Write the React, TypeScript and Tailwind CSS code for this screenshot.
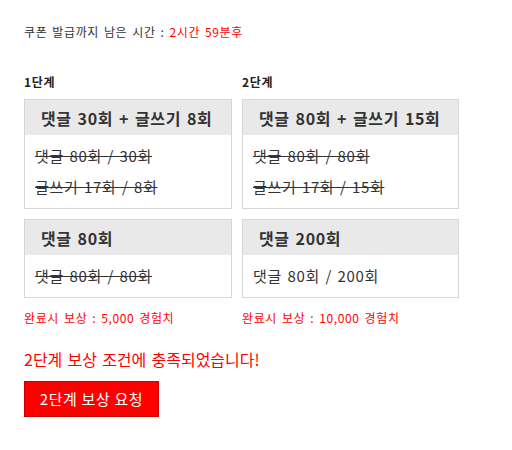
const font = "font-['Noto_Sans_CJK_KR','Noto_Sans',sans-serif] tracking-[0.04em] [word-spacing:0.1em]";

type Stage = {
  label: string;
  cards: { title: string; lines: { text: string; done: boolean }[] }[];
  reward: string;
};

const stages: Stage[] = [
  {
    label: "1단계",
    cards: [
      {
        title: "댓글 30회 + 글쓰기 8회",
        lines: [
          { text: "댓글 80회 / 30회", done: true },
          { text: "글쓰기 17회 / 8회", done: true },
        ],
      },
      {
        title: "댓글 80회",
        lines: [{ text: "댓글 80회 / 80회", done: true }],
      },
    ],
    reward: "완료시 보상 : 5,000 경험치",
  },
  {
    label: "2단계",
    cards: [
      {
        title: "댓글 80회 + 글쓰기 15회",
        lines: [
          { text: "댓글 80회 / 80회", done: true },
          { text: "글쓰기 17회 / 15회", done: true },
        ],
      },
      {
        title: "댓글 200회",
        lines: [{ text: "댓글 80회 / 200회", done: false }],
      },
    ],
    reward: "완료시 보상 : 10,000 경험치",
  },
];

function MissionCard({ title, lines }: Stage["cards"][number]) {
  return (
    <div className="border border-[#d6d6d6] bg-white">
      <div className="flex h-[35px] items-center bg-[#e9e9e9] px-4 text-[16px] font-bold text-[#333]">
        {title}
      </div>
      <div className="flex flex-col gap-[9px] px-[10px] py-[10px]">
        {lines.map((l) => (
          <p
            key={l.text}
            className={`text-[15px] leading-[22px] text-[#333] ${l.done ? "line-through" : ""}`}
          >
            {l.text}
          </p>
        ))}
      </div>
    </div>
  );
}

export default function App() {
  return (
    <div className={`min-h-[450px] bg-white px-6 pt-6 ${font}`}>
      <p className="text-[12px] leading-4 text-[#333]">
        쿠폰 발급까지 남은 시간 : <span className="text-[#ff0000]">2시간 59분후</span>
      </p>

      <div className="mt-[34px] grid grid-cols-[208px_217px] gap-x-[10px]">
        {stages.map((s) => (
          <div key={s.label} className="flex flex-col">
            <p className="mb-[9px] text-[12px] font-bold leading-4 text-[#222]">{s.label}</p>
            <div className="flex flex-col gap-[10px]">
              {s.cards.map((c) => (
                <MissionCard key={c.title} {...c} />
              ))}
            </div>
            <p className="mt-3 text-[12px] leading-4 text-[#ff0000]">{s.reward}</p>
          </div>
        ))}
      </div>

      <p className="mt-[21px] text-[16px] leading-6 tracking-normal text-[#ff0000]">
        2단계 보상 조건에 충족되었습니다!
      </p>

      <button
        type="button"
        className="mt-[10px] h-[36px] w-[135px] border border-[#c80000] bg-[#ff0000] text-[15px] text-white"
      >
        2단계 보상 요청
      </button>
    </div>
  );
}
